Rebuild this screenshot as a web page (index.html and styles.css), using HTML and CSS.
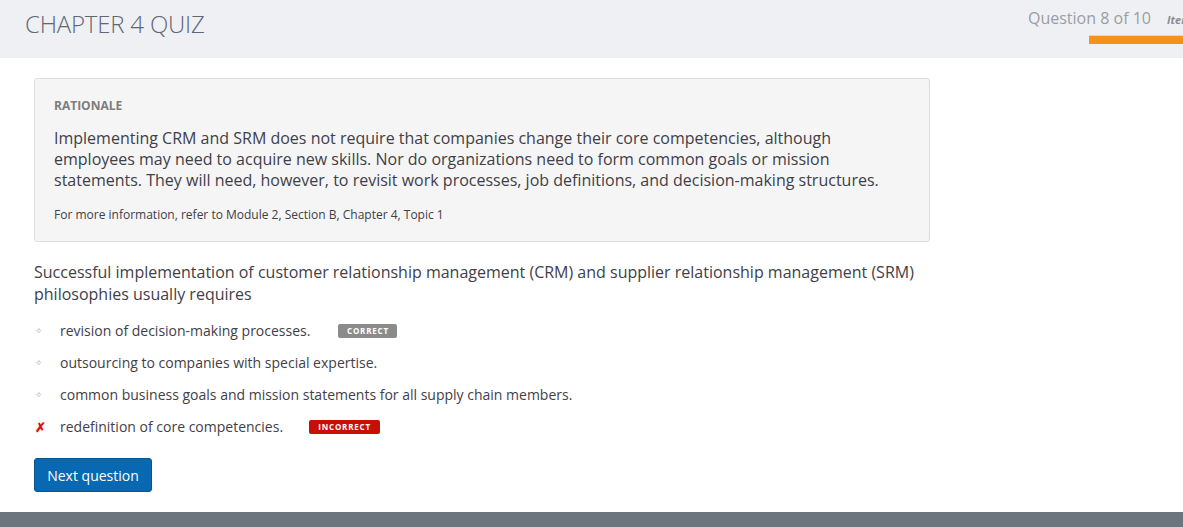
FILE: index.html
```html
<!DOCTYPE html>
<html>
<head>
<meta charset="utf-8">
<link rel="stylesheet" href="styles.css">
</head>
<body>
<header class="top">
  <h1 class="title">CHAPTER 4 QUIZ</h1>
  <div class="progress">
    <div class="progress-row">
      <span class="qcount">Question 8 of 10</span>
      <span class="items">Items</span>
    </div>
    <div class="bar"></div>
  </div>
</header>
<main class="content">
  <section class="rationale">
    <h2 class="r-label">RATIONALE</h2>
    <p class="r-text">Implementing CRM and SRM does not require that companies change their core competencies, although employees may need to acquire new skills. Nor do organizations need to form common goals or mission statements. They will need, however, to revisit work processes, job definitions, and decision-making structures.</p>
    <p class="r-ref">For more information, refer to Module 2, Section B, Chapter 4, Topic 1</p>
  </section>
  <p class="question">Successful implementation of customer relationship management (CRM) and supplier relationship management (SRM) philosophies usually requires</p>
  <ul class="options">
    <li class="opt"><span class="mark">&#10023;</span><span class="opt-text">revision of decision-making processes.</span><span class="badge badge-correct">CORRECT</span></li>
    <li class="opt"><span class="mark">&#10023;</span><span class="opt-text">outsourcing to companies with special expertise.</span></li>
    <li class="opt"><span class="mark">&#10023;</span><span class="opt-text">common business goals and mission statements for all supply chain members.</span></li>
    <li class="opt"><span class="mark mark-x">&#10007;</span><span class="opt-text">redefinition of core competencies.</span><span class="badge badge-incorrect">INCORRECT</span></li>
  </ul>
  <button class="next">Next question</button>
</main>
<footer class="foot"></footer>
</body>
</html>
```
FILE: styles.css
```css
html, body {
  margin: 0;
  padding: 0;
}
body {
  font-family: "Open Sans", "Liberation Sans", sans-serif;
  background: #fff;
  width: 1183px;
  height: 527px;
  overflow: hidden;
  display: flex;
  flex-direction: column;
}
.top {
  height: 58px;
  background: #eff0f4;
  display: flex;
  justify-content: space-between;
  align-items: flex-start;
  flex-shrink: 0;
}
.title {
  margin: 8px 0 0 25px;
  font-weight: 300;
  font-size: 24px;
  line-height: 32px;
  color: #5f6674;
  letter-spacing: -0.2px;
}
.progress {
  display: flex;
  flex-direction: column;
  align-items: flex-end;
  padding-top: 7px;
  width: 160px;
  overflow: hidden;
}
.progress-row {
  display: flex;
  align-items: baseline;
  white-space: nowrap;
  width: 155px;
}
.qcount {
  font-size: 16px;
  line-height: 22px;
  color: #999ea6;
  width: 139px;
  flex-shrink: 0;
}
.items {
  font-size: 11px;
  font-weight: 700;
  font-style: italic;
  color: #8a8d93;
}
.bar {
  margin-top: 7px;
  width: 94px;
  height: 8px;
  background: #f5921e;
  align-self: flex-end;
  box-shadow: 0 -1px 0 #d8d8d8;
}
.content {
  flex: 1;
  padding: 20px 0 0 34px;
  width: 895px;
}
.rationale {
  background: #f5f5f5;
  border: 1px solid #dedede;
  border-radius: 3px;
  padding: 19px 19px 16px 19px;
  box-sizing: border-box;
  width: 896px;
  height: 164px;
}
.r-label {
  margin: 0;
  font-size: 12px;
  font-weight: 700;
  line-height: 16px;
  color: #7d7d7d;
}
.r-text {
  margin: 14px 0 0;
  font-size: 16px;
  line-height: 21px;
  color: #3f4048;
}
.r-ref {
  margin: 16px 0 0;
  font-size: 12px;
  line-height: 16px;
  color: #3f4048;
}
.question {
  margin: 19px 0 0;
  font-size: 16px;
  line-height: 22px;
  color: #3f4048;
}
.options {
  list-style: none;
  margin: 10px 0 0;
  padding: 0;
}
.opt {
  display: flex;
  align-items: center;
  height: 32px;
  font-size: 14px;
  color: #3f4048;
}
.mark {
  width: 26px;
  font-family: "DejaVu Sans", sans-serif;
  font-size: 9px;
  color: #a8a8a8;
  padding-left: 1px;
  box-sizing: border-box;
}
.mark-x {
  font-family: "Open Sans", "Liberation Sans", sans-serif;
  font-size: 13px;
  color: #e01010;
  font-weight: 700;
}
.opt-text {
  line-height: 20px;
}
.badge {
  font-size: 8px;
  font-weight: 700;
  letter-spacing: 0.8px;
  color: #fff;
  border-radius: 2px;
  height: 14px;
  line-height: 14px;
  text-align: center;
  box-sizing: border-box;
  margin-top: -1px;
}
.badge-correct {
  background: #8b8b8b;
  width: 59px;
  margin-left: 28px;
}
.badge-incorrect {
  background: #c80f06;
  width: 71px;
  margin-left: 26px;
}
.next {
  margin-top: 15px;
  width: 118px;
  height: 34px;
  background: #0868b1;
  border: 1px solid #07548f;
  border-radius: 3px;
  color: #fff;
  font-family: "Open Sans", "Liberation Sans", sans-serif;
  font-size: 14px;
  padding: 0;
  cursor: pointer;
}
.foot {
  height: 15px;
  background: #6c757d;
  flex-shrink: 0;
}
```
